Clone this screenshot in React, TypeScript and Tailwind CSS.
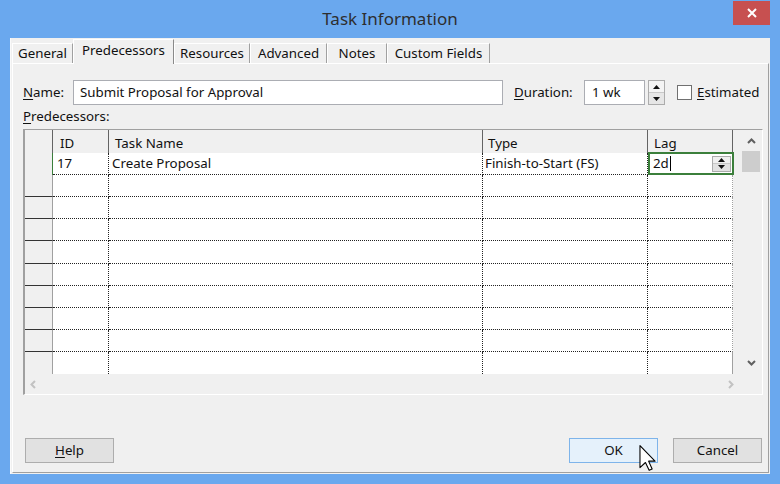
import React from "react";

const U = ({ c }: { c: string }) => <span className="underline underline-offset-2">{c}</span>;

function Spin({ big }: { big?: boolean }) {
  if (big) {
    return (
      <div className="flex flex-col w-[17px] h-[25px] border border-[#acacac]">
        <div className="flex-1 flex items-center justify-center bg-[#f4f4f4] border-b border-[#c8c8c8]">
          <svg width="7" height="4" viewBox="0 0 7 4"><polygon points="0,4 3.5,0 7,4" fill="#111" /></svg>
        </div>
        <div className="flex-1 flex items-center justify-center bg-[#e6e6e6]">
          <svg width="7" height="4" viewBox="0 0 7 4"><polygon points="0,0 3.5,4 7,0" fill="#111" /></svg>
        </div>
      </div>
    );
  }
  return (
    <div className="flex flex-col w-[19px] h-[16px] border border-[#acacac]">
      <div className="flex-1 flex items-center justify-center bg-[#f0f0f0] border-b border-[#c8c8c8]">
        <svg width="7" height="4" viewBox="0 0 7 4"><polygon points="0,4 3.5,0 7,4" fill="#111" /></svg>
      </div>
      <div className="flex-1 flex items-center justify-center bg-[#e2e2e2]">
        <svg width="7" height="4" viewBox="0 0 7 4"><polygon points="0,0 3.5,4 7,0" fill="#111" /></svg>
      </div>
    </div>
  );
}

const tabs = [
  { t: "General", w: "w-[61px]" },
  { t: "Predecessors", w: "w-[101px]", sel: true },
  { t: "Resources", w: "w-[76px]" },
  { t: "Advanced", w: "w-[77px]" },
  { t: "Notes", w: "w-[60px]" },
  { t: "Custom Fields", w: "w-[103px]" },
];

export default function App() {
  const rows = Array.from({ length: 10 }, (_, i) => i);
  return (
    <div className="relative w-[780px] h-[484px] bg-[#6aa8ee] overflow-hidden flex flex-col font-['Noto_Sans',sans-serif] text-[13.3px] text-[#111]">
      {/* title bar */}
      <div className="h-[38px] grid grid-cols-[1fr_auto_1fr] shrink-0">
        <div />
        <div className="flex items-center text-[17px] text-[#2e2e2e] pb-[1px]">Task Information</div>
        <div className="flex justify-end items-start">
          <div className="mt-[1px] mr-[10px] w-[37px] h-[24px] bg-[#c75050] flex items-center justify-center">
            <svg width="10" height="10" viewBox="0 0 10 10">
              <path d="M1 1 L9 9 M9 1 L1 9" stroke="#fff" strokeWidth="2" />
            </svg>
          </div>
        </div>
      </div>

      {/* client */}
      <div className="mx-[10px] h-[436px] bg-[#f0f0f0] flex flex-col border-l border-[#fafafa]">
        {/* tabs */}
        <div className="h-[25px] flex items-end pl-[1px] shrink-0">
          {tabs.map((tb) =>
            tb.sel ? (
              <div
                key={tb.t}
                className={`${tb.w} h-[25px] -mb-px relative z-10 bg-[#f0f0f0] border-t border-l border-white border-r border-r-[#8a8a8a] flex items-center justify-center pb-[2px]`}
              >
                {tb.t}
              </div>
            ) : (
              <div
                key={tb.t}
                className={`${tb.w} h-[20px] bg-[#f0f0f0] border-t border-l border-white border-r border-r-[#a0a0a0] flex items-center justify-center pt-px`}
              >
                {tb.t}
              </div>
            )
          )}
        </div>

        {/* panel */}
        <div className="flex-1 mx-[1px] mb-[1px] border-t border-l border-white border-r border-b border-r-[#a0a0a0] border-b-[#a0a0a0] pl-[10px] pr-[5px] flex flex-col">
          {/* name row */}
          <div className="mt-[16px] h-[25px] flex items-center">
            <div className="w-[50px] pt-px"><U c="N" />ame:</div>
            <div className="w-[430px] h-[25px] bg-white border border-[#abadb3] pl-[6px] pt-px flex items-center">
              Submit Proposal for Approval
            </div>
            <div className="ml-[11px] w-[70px] pt-px"><U c="D" />uration:</div>
            <div className="w-[61px] h-[25px] bg-white border border-[#abadb3] pl-[7px] pt-px flex items-center">1 wk</div>
            <div className="ml-[3px]"><Spin big /></div>
            <div className="ml-[12px] w-[15px] h-[15px] bg-white border border-[#707070]" />
            <div className="ml-[5px] pt-px"><U c="E" />stimated</div>
          </div>

          <div className="h-[24px] flex items-center"><U c="P" />redecessors:</div>

          {/* grid */}
          <div className="h-[266px] border-l-2 border-t border-l-[#a0a0a0] border-t-[#a0a0a0] border-r border-b border-r-white border-b-white flex flex-col">
            <div className="flex h-[244px]">
              <div className="w-[708px] flex flex-col">
                {/* header */}
                <div className="flex h-[23px] bg-[#f0f0f0] shrink-0">
                  <div className="w-[28px] border-r border-[#646464]" />
                  <div className="w-[56px] border-r border-[#646464] pl-[7px] pt-[5px] flex items-center">ID</div>
                  <div className="w-[374px] border-r border-[#646464] pl-[6px] pt-[5px] flex items-center">Task Name</div>
                  <div className="w-[165px] border-r border-[#646464] pl-[5px] pt-[5px] flex items-center">Type</div>
                  <div className="w-[85px] border-r border-[#646464] pl-[6px] pt-[5px] flex items-center">Lag</div>
                </div>
                {rows.map((i) => {
                  const last = i === rows.length - 1;
                  const bb = last ? "" : "border-b border-dotted border-b-[#222]";
                  return (
                    <div key={i} className={`flex ${i === 4 ? "h-[23px]" : "h-[22px]"} shrink-0`}>
                      <div
                        className={`w-[28px] bg-[#f0f0f0] border-r ${i === 0 ? "border-r-[#3b7f3b]" : "border-r-[#a0a0a0]"} ${
                          i === 0 || last ? "" : "border-b border-b-[#333]"
                        }`}
                      />
                      <div className={`w-[56px] bg-white border-r border-dotted border-r-[#222] ${bb} pl-[4px] pt-px flex items-center`}>
                        {i === 0 ? "17" : ""}
                      </div>
                      <div className={`w-[374px] bg-white border-r border-dotted border-r-[#222] ${bb} pl-[3px] pt-px flex items-center`}>
                        {i === 0 ? "Create Proposal" : ""}
                      </div>
                      <div className={`w-[165px] bg-white border-r border-dotted border-r-[#222] ${bb} pl-[2px] pt-px flex items-center`}>
                        {i === 0 ? "Finish-to-Start (FS)" : ""}
                      </div>
                      <div className={`relative w-[85px] bg-white border-r border-r-[#a0a0a0] ${bb} flex items-center justify-between pl-[5px] pr-[1px]`}>
                        {i === 0 && (
                          <>
                            <div className="flex items-center">
                              2d<span className="ml-[1px] w-px h-[15px] bg-black" />
                            </div>
                            <Spin />
                            <div className="absolute -top-px -bottom-px left-0 -right-[2px] border-2 border-[#3b7f3b] pointer-events-none" />
                          </>
                        )}
                      </div>
                    </div>
                  );
                })}
              </div>
              {/* vertical scrollbar */}
              <div className="w-[28px] pl-[9px] pr-[1px] flex">
                <div className="w-[18px] flex flex-col">
                  <div className="h-[21px] flex items-center justify-center">
                    <svg width="9" height="6" viewBox="0 0 9 6"><polyline points="1,5 4.5,1.5 8,5" fill="none" stroke="#606060" strokeWidth="2" /></svg>
                  </div>
                  <div className="h-[21px] bg-[#cdcdcd]" />
                  <div className="flex-1" />
                  <div className="h-[22px] flex items-center justify-center">
                    <svg width="9" height="6" viewBox="0 0 9 6"><polyline points="1,1 4.5,4.5 8,1" fill="none" stroke="#606060" strokeWidth="2" /></svg>
                  </div>
                </div>
              </div>
            </div>
            {/* horizontal scrollbar */}
            <div className="h-[20px] flex items-center justify-between pl-[5px] pr-[28px]">
              <svg width="6" height="9" viewBox="0 0 6 9"><polyline points="5,1 1.5,4.5 5,8" fill="none" stroke="#c2c2c2" strokeWidth="2" /></svg>
              <svg width="6" height="9" viewBox="0 0 6 9"><polyline points="1,1 4.5,4.5 1,8" fill="none" stroke="#c2c2c2" strokeWidth="2" /></svg>
            </div>
          </div>

          {/* buttons */}
          <div className="mt-[43px] flex items-center">
            <div className="ml-[2px] w-[89px] h-[25px] bg-[#e1e1e1] border border-[#adadad] flex items-center justify-center pt-px"><span><U c="H" />elp</span></div>
            <div className="ml-auto w-[89px] h-[25px] bg-[#e5f1fb] border border-[#7eb4ea] flex items-center justify-center pt-px">OK</div>
            <div className="ml-[15px] mr-[1px] w-[89px] h-[25px] bg-[#e1e1e1] border border-[#adadad] flex items-center justify-center pt-px">Cancel</div>
          </div>
        </div>
      </div>

      {/* mouse cursor */}
      <svg className="absolute left-[639px] top-[445px]" width="17" height="26" viewBox="0 0 12 19">
        <path d="M0.5 0.5 L0.5 16.5 L4.5 12.8 L7.2 18.5 L9.4 17.5 L6.8 11.8 L11.5 11.8 Z" fill="#fff" stroke="#000" strokeWidth="0.8" strokeLinejoin="round" />
      </svg>
    </div>
  );
}
